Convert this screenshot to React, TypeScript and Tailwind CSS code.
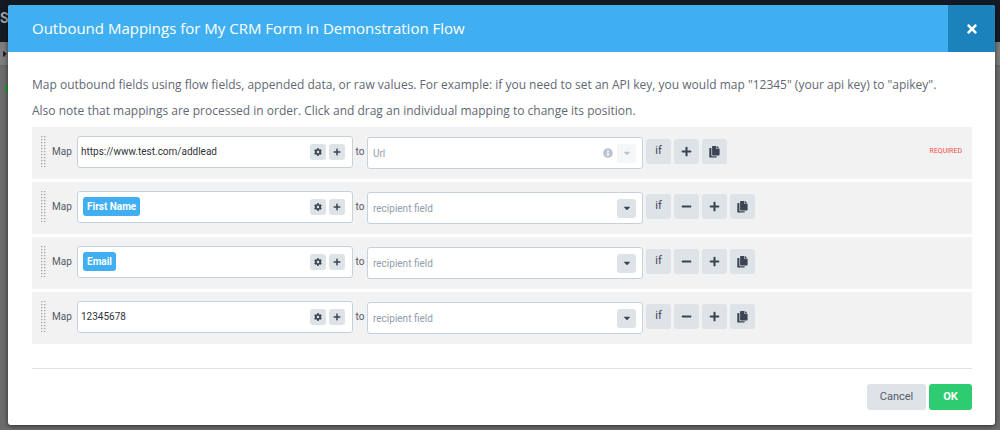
import { FaCaretDown, FaCaretRight, FaCog, FaInfoCircle, FaMinus, FaPlus, FaTimes } from "react-icons/fa";
import type { ReactNode } from "react";

type Mapping = {
  id: string;
  value?: string;
  tag?: string;
  recipient: string;
  required?: boolean;
};

const mappings: Mapping[] = [
  { id: "url", value: "https://www.test.com/addlead", recipient: "Url", required: true },
  { id: "first-name", tag: "First Name", recipient: "recipient field" },
  { id: "email", tag: "Email", recipient: "recipient field" },
  { id: "number", value: "12345678", recipient: "recipient field" },
];

const handleRows = [0, 3, 6, 9, 12, 15, 18, 21, 24, 27, 30];

function DragHandle() {
  return (
    <svg width="5" height="31" viewBox="0 0 5 31" fill="#a3a5a8" className="shrink-0 cursor-move" aria-hidden="true">
      {handleRows.map((y) => (
        <g key={y}>
          <rect x="0" y={y} width="1.4" height="1.2" />
          <rect x="3" y={y} width="1.4" height="1.2" />
        </g>
      ))}
    </svg>
  );
}

function CopyIcon() {
  return (
    <svg width="11" height="12" viewBox="0 0 11 12" fill="currentColor" aria-hidden="true">
      <path d="M3.8 0h3.6v2.9h3.2v5.9a.7.7 0 0 1-.7.7H3.8a.7.7 0 0 1-.7-.7V.7a.7.7 0 0 1 .7-.7Z" />
      <path d="M8 0l2.6 2.4H8Z" />
      <path d="M2.4 2H1a.7.7 0 0 0-.7.7v8.2a.7.7 0 0 0 .7.7h6a.7.7 0 0 0 .7-.7v-.7H3.2a.8.8 0 0 1-.8-.8Z" />
    </svg>
  );
}

function ToolButton({ label, children }: { label: string; children: ReactNode }) {
  return (
    <button
      type="button"
      aria-label={label}
      className="flex size-[25px] items-center justify-center rounded-[3px] bg-[#dee3e7] text-[11px] text-[#3a4453]"
    >
      {children}
    </button>
  );
}

function MiniButton({ label, children }: { label: string; children: ReactNode }) {
  return (
    <button
      type="button"
      aria-label={label}
      className="flex size-4 items-center justify-center rounded-[3px] bg-[#dee3e7] text-[8px] text-[#3a4453]"
    >
      {children}
    </button>
  );
}

function MappingRow({ mapping }: { mapping: Mapping }) {
  const { id, value, tag, recipient, required } = mapping;
  return (
    <li className="flex h-[52px] items-center bg-[#f2f2f2] pr-[10px] pb-[3px] pl-[9px]">
      <DragHandle />
      <label htmlFor={`${id}-source`} className="ml-[6px] w-[25px] text-[10px] text-[#525b68]">
        Map
      </label>
      <div className="flex h-8 w-[276px] items-center rounded-[3px] border border-[#c5d2dc] bg-white pr-[7px] pl-[3px]">
        {tag && (
          <span className="ml-[2px] flex h-[19px] shrink-0 items-center rounded-[3px] bg-[#40aff2] px-1 text-[10px] font-bold text-white">
            {tag}
          </span>
        )}
        <input
          id={`${id}-source`}
          defaultValue={value}
          className="min-w-0 flex-1 bg-transparent text-[10px] text-[#30343a] outline-none"
        />
        <div className="flex gap-[3px]">
          <MiniButton label="Value settings">
            <FaCog />
          </MiniButton>
          <MiniButton label="Add value">
            <FaPlus />
          </MiniButton>
        </div>
      </div>
      <label htmlFor={`${id}-recipient`} className="w-[14px] text-center text-[10px] text-[#525b68]">
        to
      </label>
      <div className="mt-[3px] flex h-8 w-[276px] items-center rounded-[3px] border border-[#c5d2dc] bg-white pr-[6px] pl-[5px]">
        <input
          id={`${id}-recipient`}
          placeholder={recipient}
          className="min-w-0 flex-1 bg-transparent text-[10px] outline-none placeholder:text-[#929dab]"
        />
        {required && <FaInfoCircle className="mr-1 text-[10px] text-[#bcc5cd]" />}
        <button
          type="button"
          aria-label="Show fields"
          disabled={required}
          className="flex h-[19px] w-[19px] items-center justify-center rounded-[3px] bg-[#dee3e7] text-[10px] text-[#3a4453] disabled:bg-[#f5f6f7] disabled:text-[#bcc5cd]"
        >
          <FaCaretDown />
        </button>
      </div>
      <div className="ml-[3px] flex gap-[3px]">
        <ToolButton label="Add condition">if</ToolButton>
        {!required && (
          <ToolButton label="Remove mapping">
            <FaMinus />
          </ToolButton>
        )}
        <ToolButton label="Add mapping">
          <FaPlus />
        </ToolButton>
        <ToolButton label="Duplicate mapping">
          <CopyIcon />
        </ToolButton>
      </div>
      {required && <span className="ml-auto text-[7px] text-[#f24f40]">REQUIRED</span>}
    </li>
  );
}

export default function App() {
  return (
    <div className="relative min-h-screen bg-[#6c6c6c] font-['Roboto','Open_Sans',sans-serif]">
      <div className="absolute inset-0 overflow-hidden" aria-hidden="true">
        <div className="h-[42px] bg-[#141a24] pt-2 text-[14px] font-bold text-[#a3a5a8]">S</div>
        <div className="flex h-6 items-center border-b border-[#666] bg-[#7d7d7d] text-[10px] text-[#15191f]">
          <FaCaretRight />
        </div>
        <div className="pt-[18px] pl-[5px]">
          <div className="size-[10px] rounded-full bg-[#22a035]" />
        </div>
      </div>
      <div className="relative flex min-h-screen flex-col pt-[5px] pr-[5px] pb-[5px] pl-2">
        <section
          role="dialog"
          aria-labelledby="dialog-title"
          className="flex flex-1 flex-col overflow-hidden rounded-[3px] bg-white shadow-[0_1px_5px_rgba(0,0,0,0.6)]"
        >
          <header className="flex h-[47px] items-center justify-between bg-[#40aff2] pl-6 text-white">
            <h1 id="dialog-title" className="font-['Open_Sans',sans-serif] text-[15px]">
              Outbound Mappings for My CRM Form in Demonstration Flow
            </h1>
            <button
              type="button"
              aria-label="Close"
              className="flex size-[47px] items-center justify-center bg-[#1b82bb] text-[14px]"
            >
              <FaTimes />
            </button>
          </header>
          <div className="pt-5 pr-[23px] pl-6">
            <div className="font-['Open_Sans',sans-serif] text-[12px] leading-[26px] text-[#626873]">
              <p>
                Map outbound fields using flow fields, appended data, or raw values. For example: if you need to set an
                API key, you would map "12345" (your api key) to "apikey".
              </p>
              <p>
                Also note that mappings are processed in order. Click and drag an individual mapping to change its
                position.
              </p>
            </div>
            <ul className="mt-[3px] flex flex-col gap-[3px]">
              {mappings.map((mapping) => (
                <MappingRow key={mapping.id} mapping={mapping} />
              ))}
            </ul>
            <footer className="mt-6 flex justify-end gap-[3px] border-t border-[#dfe4e6] pt-[15px] text-[11px]">
              <button type="button" className="h-[26px] w-[59px] rounded-[3px] bg-[#dee3e7] text-[#535c6b]">
                Cancel
              </button>
              <button type="button" className="h-[26px] w-[43px] rounded-[3px] bg-[#2ecc71] font-bold text-white">
                OK
              </button>
            </footer>
          </div>
        </section>
      </div>
    </div>
  );
}
